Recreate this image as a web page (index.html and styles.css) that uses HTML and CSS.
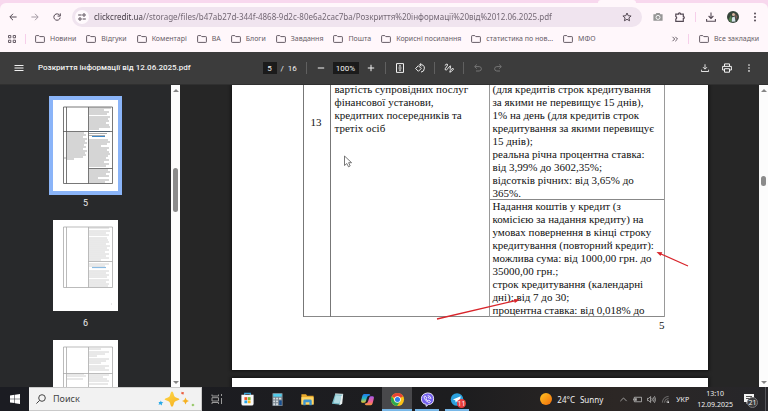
FILE: index.html
```html
<!DOCTYPE html>
<html lang="uk">
<head>
<meta charset="utf-8">
<title>Розкриття інформації від 12.06.2025.pdf</title>
<link rel="stylesheet" href="styles.css">
</head>
<body>
<svg class="defs" aria-hidden="true">
  <symbol id="folder" viewBox="0 0 10 8"><path d="M.6 1.2q0-.6.6-.6h2.6l1 1h4q.6 0 .6.6v4.6q0 .6-.6.6H1.2q-.6 0-.6-.6z" fill="none" stroke="currentColor" stroke-width="1"/></symbol>
  <symbol id="dots" viewBox="0 0 10 10"><circle cx="5" cy="1.5" r="1"/><circle cx="5" cy="5" r="1"/><circle cx="5" cy="8.5" r="1"/></symbol>
  <symbol id="download" viewBox="0 0 10 10"><path d="M5 .5v5.6M2.6 4 5 6.4 7.4 4M.6 7v2.2h8.8V7" fill="none" stroke="currentColor" stroke-width="1.1"/></symbol>
</svg>

<header class="browser">
  <div class="tabstrip"><div class="active-tab"></div></div>
  <div class="navbar">
    <button class="icon-btn" aria-label="Back"><svg class="i8" viewBox="0 0 8 8"><path d="M7.6 4H1M4 .8.8 4 4 7.2"/></svg></button>
    <button class="icon-btn dim" aria-label="Forward"><svg class="i8" viewBox="0 0 8 8"><path d="M.4 4H7M4 .8 7.2 4 4 7.2"/></svg></button>
    <button class="icon-btn" aria-label="Reload"><svg class="i8" viewBox="0 0 8 8"><path d="M6.9 2.6A3.2 3.2 0 1 0 7.2 4.6M7.3.4v2.7H4.6"/></svg></button>
    <div class="omnibox">
      <button class="site-btn" aria-label="Site information"><svg class="i8" viewBox="0 0 8 8"><path d="M.2 2h3.4M4.6 6h3.2"/><circle cx="6" cy="2" r="1.2"/><circle cx="2" cy="6" r="1.2"/></svg></button>
      <input class="url" type="text" aria-label="Address" value="clickcredit.ua//storage/files/b47ab27d-344f-4868-9d2c-80e6a2cac7ba/Розкриття%20інформації%20від%2012.06.2025.pdf">
      <button class="star-btn" aria-label="Bookmark"><svg class="i10" viewBox="0 0 10 10"><path d="M5 1l1.2 2.7 2.9.3-2.2 1.9.7 2.9L5 7.300 2.400 8.800l.7-2.900L.9 4l2.900-.3z"/></svg></button>
    </div>
    <button class="icon-btn camera" aria-label="Screenshot"><svg class="i10" viewBox="0 0 10 10"><path d="M.4 2.300h2.200l.8-1.200h3.200l.8 1.200h2.200v6.500H.4z" fill="#969696" stroke="none"/><circle cx="5" cy="5.400" r="2" stroke="#fff" stroke-width=".9"/></svg></button>
    <button class="icon-btn" aria-label="Extensions"><svg class="i10" viewBox="0 0 10 10"><path d="M.8 2.200h2.800V1.400q.9-1.200 1.800 0v.8h2.900V4.700h.5q1 .9 0 1.800h-.5v2.800H.8V7q1.800-1.300 0-2.600z" stroke-width="1.200"/></svg></button>
    <span class="divider"></span>
    <button class="icon-btn" aria-label="Downloads"><svg class="i10"><use href="#download"/></svg></button>
    <button class="icon-btn" aria-label="Profile"><svg class="i12" viewBox="0 0 12 12"><circle cx="6" cy="6" r="6" fill="#36443a" stroke="none"/><path d="M1.500 8.500 4 4l1 5-1 2.500z" fill="#55804f" stroke="none"/><path d="M8 2.500l2.500 3L9 9z" fill="#7c5a58" stroke="none"/><circle cx="6.500" cy="3.500" r="1.500" fill="#d9b7a0" stroke="none"/><path d="M4.800 10.800 5 6.500l2.700-1 .8 5z" fill="#d4e3ea" stroke="none"/></svg></button>
    <button class="icon-btn" aria-label="Menu"><svg class="i10 solid"><use href="#dots"/></svg></button>
  </div>
  <nav class="bookmarks">
    <button class="apps" aria-label="Apps"><svg class="i8" viewBox="0 0 8 8"><path d="M.5.5h2.300v2.300H.5zM5.200.5h2.300v2.300H5.200zM.5 5.200h2.300v2.300H.5zM5.200 5.200h2.300v2.300H5.200z"/></svg></button>
    <span class="divider"></span>
    <div class="links">
      <a href="#"><svg class="folder"><use href="#folder"/></svg>Новини</a>
      <a href="#"><svg class="folder"><use href="#folder"/></svg>Відгуки</a>
      <a href="#"><svg class="folder"><use href="#folder"/></svg>Коментарі</a>
      <a href="#"><svg class="folder"><use href="#folder"/></svg>ВА</a>
      <a href="#"><svg class="folder"><use href="#folder"/></svg>Блоги</a>
      <a href="#"><svg class="folder"><use href="#folder"/></svg>Завдання</a>
      <a href="#"><svg class="folder"><use href="#folder"/></svg>Пошта</a>
      <a href="#"><svg class="folder"><use href="#folder"/></svg>Корисні посилання</a>
      <a href="#"><svg class="folder"><use href="#folder"/></svg>статистика по нов...</a>
      <a href="#"><svg class="folder"><use href="#folder"/></svg>МФО</a>
    </div>
    <button class="more" aria-label="More bookmarks"><svg class="i6" viewBox="0 0 6 6"><path d="M.5.8 2.700 3 .5 5.200M3.300.8 5.500 3 3.300 5.200"/></svg></button>
    <span class="divider"></span>
    <a href="#"><svg class="folder"><use href="#folder"/></svg>Все закладки</a>
  </nav>
</header>

<div class="pdfbar">
  <div class="pdf-left">
    <button class="tool menu" aria-label="Sidebar"><svg viewBox="0 0 10 10"><path d="M.5 2.500h9M.5 5h9M.5 7.500h9"/></svg></button>
    <h1>Розкриття інформації від 12.06.2025.pdf</h1>
  </div>
  <div class="pdf-mid">
    <input class="field page-no" type="text" aria-label="Page" value="5">
    <span class="total">/&nbsp; 16</span>
    <span class="sep"></span>
    <button class="tool" aria-label="Zoom out"><svg viewBox="0 0 10 10"><path d="M1.800 5h6.400"/></svg></button>
    <input class="field zoom" type="text" aria-label="Zoom" value="100%">
    <button class="tool" aria-label="Zoom in"><svg viewBox="0 0 10 10"><path d="M1.800 5h6.400M5 1.800v6.400"/></svg></button>
    <span class="sep"></span>
    <button class="tool" aria-label="Fit to page"><svg viewBox="0 0 10 10"><path d="M1.500.600h7v8.800h-7zM3.500 5h3"/><path d="M5 1.700 3.600 3.400h2.800zM5 8.300 3.600 6.600h2.800z" class="fill"/></svg></button>
    <button class="tool" aria-label="Rotate"><svg viewBox="0 0 10 10"><path d="M3.400 2.700.600 5.500l2.800 2.800 2.800-2.800zM5 1.700q4.300-.4 4.400 3.500-.1 3.500-3.400 3.900M6.300.200 4.500 1.800l1.800 1.500"/></svg></button>
    <span class="sep"></span>
    <button class="tool" aria-label="Draw"><svg viewBox="0 0 10 10"><path d="M.800 2.500Q3.800-.300 3.500 2.200 2.700 4 1.400 5.300.500 7.200 2.300 7q2-1.400 3.500-3.800.900-1 .8.600-.700 1.600-.400 2.600M5.800 9.200l.4-1.600 2.400-2.500 1 1-2.400 2.500z"/></svg></button>
    <span class="sep"></span>
    <button class="tool off" aria-label="Undo"><svg viewBox="0 0 10 10"><path d="M3.800 1.500 1.700 3.600l2.100 2.100M1.700 3.600h4.500q2.200.2 2.200 2.200T6.200 8H3"/></svg></button>
    <button class="tool off" aria-label="Redo"><svg viewBox="0 0 10 10"><path d="M6.200 1.500l2.100 2.100-2.100 2.100M8.300 3.600H3.800Q1.600 3.800 1.600 5.800T3.800 8H7"/></svg></button>
  </div>
  <div class="pdf-right">
    <button class="tool" aria-label="Download"><svg viewBox="-1 -1 12 12"><use href="#download" width="10" height="10"/></svg></button>
    <button class="tool" aria-label="Print"><svg viewBox="0 0 10 10"><path d="M2.500 3.200V.900h5v2.300M2.400 7H.600V3.400h8.800V7H7.600M2.500 5.700h5v3.500h-5z"/></svg></button>
    <button class="tool" aria-label="More"><svg class="white" viewBox="-1 -1 12 12"><use href="#dots" width="10" height="10"/></svg></button>
  </div>
</div>

<main class="viewer">
  <aside class="thumbs">
    <button class="thumb current">
      <svg viewBox="0 0 65 91">
        <path class="txt" d="M36 8h22M36 10h15M36 12h20M36 14h18M36 17h21M36 19h19M36 21h20M36 23h17M36 25h20M36 27h21M36 29h10M36 33.500h18M36 35.500h16M36 40h19M36 42h21M36 44h18M36 46h12M36 48h20M36 50h18M36 52h20M36 54h21M36 56h19M36 58h17M36 60h20M36 62h15M36 64h20M36 66h17M36 70h19M36 72h21M36 74h17M36 76h20M36 78h9M36 80h20M36 82h16M14 33h17M14 35h19M14 37h16M14 39h20M14 41h18M14 43h20M14 45h17M14 47h19M14 49h16M14 51h20M14 53h18M14 55h19M14 57h16M14 59h7M11 58h2"/>
        <path class="link" d="M36 31.500h21M39 36.500h13"/>
        <path class="grid" d="M10.500 7v76.500h49V7zM13.500 7v76.500M35.500 7v76.500M10 31.500h49.500M35.500 68.500h24"/>
      </svg>
      <span>5</span>
    </button>
    <button class="thumb">
      <svg viewBox="0 0 65 91">
        <path class="txt faint" d="M36 8h20M36 11h21M36 13h17M36 15h20M36 18h18M36 20h19M36 22h20M36 24h17M36 26h21M36 28h18M36 30h20M36 32h16M36 34h20M36 36h17M36 38h20M36 40h12M36 44h20M36 46h16M36 51h20M36 53h17M36 55h20M36 57h18M36 60h20M36 62h17M36 64h20M36 66h19M58 84h1"/>
        <path class="link faint" d="M39 47.500h14"/>
        <path class="grid faint" d="M10.500 7v60.500h49V7zM13.500 7v60.500M35.500 7v60.500M35.500 41.500h24"/>
      </svg>
      <span>6</span>
    </button>
    <button class="thumb" aria-label="Page 7">
      <svg viewBox="0 0 65 91">
        <path class="txt faint" d="M36 9h12M36 12h20M36 14h16M36 16h8M36 19h20M36 21h17M36 23h12M36 26h20M36 28h16M36 30h20M36 35h20M36 37h14M36 39h18M36 41h20M36 44h19M14 34h17M14 36h19M14 39h16"/>
        <path class="grid faint" d="M10.500 7v76.500h49V7zM13.500 7v76.500M35.500 7v76.500M10 33.500h49.500"/>
      </svg>
    </button>
  </aside>
  <div class="scrollbar side"><i class="up"></i><b></b><i class="down"></i></div>

  <section class="pages">
    <article class="page">
      <table>
        <tbody>
          <tr>
            <td class="num" rowspan="2">13</td>
            <td class="name" rowspan="2">вартість супровідних послуг<br>фінансової установи,<br>кредитних посередників та<br>третіх осіб</td>
            <td class="terms">(для кредитів строк кредитування<br>за якими не перевищує 15 днів),<br>1% на день (для кредитів строк<br>кредитування за якими перевищує<br>15 днів);<br>реальна річна процентна ставка:<br>від 3,99% до 3602,35%;<br>відсотків річних: від 3,65% до<br>365%.</td>
          </tr>
          <tr>
            <td class="terms">Надання коштів у кредит (з<br>комісією за надання кредиту) на<br>умовах повернення в кінці строку<br>кредитування (повторний кредит):<br>можлива сума: від 1000,00 грн. до<br>35000,00 грн.;<br>строк кредитування (календарні<br>дні): від 7 до 30;<br>процентна ставка: від 0,018% до</td>
          </tr>
        </tbody>
      </table>
      <p class="folio">5</p>
      <svg class="marks" viewBox="0 0 476 285" aria-hidden="true">
        <path d="M205 234 284 215.500M456 181 429 169" stroke="#d8252b" stroke-width="1.300"/>
        <path d="M288 214.500l-6-.600.800 4zM424.500 167l5.800.300-1.800 3.700z" fill="#d8252b"/>
        <path d="M112.500 71v9.500l2.300-2 1.700 3.300 1.700-.900-1.600-3.200h3z" fill="#fff" stroke="#555" stroke-width=".8"/>
      </svg>
    </article>
    <article class="page next"></article>
  </section>
  <div class="scrollbar main"><i class="up"></i><b></b><i class="down"></i></div>
</main>

<footer class="taskbar">
  <button class="start" aria-label="Start"><svg viewBox="0 0 10 10"><path d="M0 1.400 4.500.800v3.900H0zM5 .700 10 0v4.700H5zM0 5.200h4.500v3.900L0 8.500zM5 5.200h5V10L5 9.300z" fill="#fff"/></svg></button>
  <label class="search">
    <svg class="lens" viewBox="0 0 10 10"><circle cx="6" cy="4" r="3.300"/><path d="M3.600 6.400.400 9.600"/></svg>
    <input type="text" placeholder="Поиск" aria-label="Поиск">
    <svg class="sparkle" viewBox="0 0 38 16"><defs><linearGradient id="gold" x2="1" y2="1"><stop stop-color="#ffda4a"/><stop offset="1" stop-color="#f2a313"/></linearGradient></defs><path d="M15 .500q1.200 0 2 4 .5 1.500 2 2 3.500 1 3.500 1.700T19 9.900q-1.500.5-2 2-.8 3.800-2 3.800t-2-3.800q-.5-1.500-2-2-3.500-1-3.500-1.700T11 6.500q1.500-.5 2-2 .8-4 2-4zM28.500 6.500l1.200 2.400 2.300 1-2.300 1-1.200 2.500-1.200-2.500-2.300-1 2.300-1z" fill="url(#gold)"/><path d="M3.700 9.500l.9 1.600 1.800.3-1.600 1 .2 2-1.600-1.200-1.900.6.800-1.600-.8-1.300 1.800.2z" fill="#25a9e8"/><path d="M24.500.700l1.300.6 1-.2-.2 2.300-2.300-.3z" fill="#ea5b3c"/><path d="M36 12.500l.6 1 1.100.4-1.100.5-.6 1.200-.8-1.100-1-.4 1.100-.6z" fill="#7dbd42"/></svg>
  </label>
  <button class="app" aria-label="Task view"><svg class="i12" viewBox="0 0 12 12"><path d="M1 1.500V3h6.500V1.500M1 11V9.500h6.500V11M1 4.700h6.500V8H1zM10.500 1v2M10.500 5v6" fill="none" stroke="#999"/></svg></button>
  <button class="app" aria-label="Store"><svg viewBox="0 0 16 16"><path d="M5 3.500V1.500h6v2" fill="none" stroke="#39a6dc" stroke-width="1.200"/><path d="M1.500 3h13v9.500q0 2-2 2h-9q-2 0-2-2z" fill="#f7f7f7"/><path d="M4.700 5.500h3v3h-3z" fill="#f15223"/><path d="M8.300 5.500h3v3h-3z" fill="#7cbb32"/><path d="M4.700 9h3v3h-3z" fill="#27a4e8"/><path d="M8.300 9h3v3h-3z" fill="#fbb91b"/></svg></button>
  <button class="app" aria-label="Calculator"><svg viewBox="0 0 16 16"><rect x="2.500" y="1" width="11" height="14" rx="1" fill="#77838c"/><path d="M3.500 2h9v3h-9z" fill="#51cdec"/><path d="M3.500 6h2v2h-2zM6.500 6h2v2h-2zM9.500 6h2.500v2H9.500zM3.500 9h2v2h-2zM6.500 9h2v2h-2zM3.500 12h2v2h-2zM6.500 12h2v2h-2z" fill="#d6dde2"/><path d="M9.800 9h2.700v5H9.800z" fill="#174f92"/></svg></button>
  <button class="app" aria-label="Explorer"><svg viewBox="0 0 16 16"><path d="M1.500 2.500h5l1 1.500h7v9h-13z" fill="#e9a92b"/><path d="M1.500 5.500h13v8h-13z" fill="#ffd766"/><path d="M3.500 14V9.500q0-1.500 1.500-1.500h6q1.500 0 1.500 1.500V14h-2.500v-3h-4v3z" fill="#3d94cf"/></svg></button>
  <button class="app" aria-label="Notepad"><svg viewBox="0 0 16 16"><path d="M5.500 2 14 2.500l-2.500 11L2 12.500z" fill="#75b9c5"/><path d="M6 3.500l6 .5-2 8-6-.5z" fill="#b2dce3"/><path d="M12 4l2-1-1 9.500-3 1.500z" fill="#e8eff0"/><path d="M5.500 2l8.500.5" stroke="#e5f3f5"/></svg></button>
  <button class="app" aria-label="Copilot"><svg viewBox="0 0 16 16"><defs><linearGradient id="cb" y2="1" x2="0"><stop stop-color="#2378ee"/><stop offset=".5" stop-color="#22b5c8"/><stop offset="1" stop-color="#f1c928"/></linearGradient><linearGradient id="cr" y2="1" x2="0"><stop stop-color="#a65bea"/><stop offset=".6" stop-color="#f36192"/><stop offset="1" stop-color="#f49a39"/></linearGradient></defs><path d="M4.500 2h5q1.200 0 1.500 1.500L9.500 4Q8 4 7.300 6.500L6.200 10q-.4 1.500-2 1.500H2.500Q.5 11.500 1.500 8l1-4Q3 2 4.500 2z" fill="url(#cb)"/><path d="M11.500 14h-5Q5.300 14 5 12.500l1.500-.5Q8 12 8.700 9.500L9.800 6q.4-1.500 2-1.500h1.700q2 0 1 3.500l-1 4q-.5 2-2 2z" fill="url(#cr)"/></svg></button>
  <button class="app open focus" aria-label="Chrome"><svg viewBox="0 0 16 16"><circle cx="8" cy="8" r="7" fill="#fbc116"/><path d="M8 8 1.900 4.500A7 7 0 0 1 14.100 4.500z" fill="#e84335"/><path d="M1.900 4.500A7 7 0 0 0 7.500 15L11 9.700 5 9.800z" fill="#2da94f"/><circle cx="8" cy="8" r="3.500" fill="#fff"/><circle cx="8" cy="8" r="2.700" fill="#2f7de9"/></svg></button>
  <button class="app open" aria-label="Viber"><svg viewBox="0 0 16 16"><path d="M8 1q6.500 0 6.500 6.200T9 13.300L6.500 15.300v-2.200Q1.500 12.500 1.500 7.200T8 1z" fill="#7360ed" stroke="#eeeaff" stroke-width="1"/><path d="M5.300 4q-1.500.8-.7 2.700 1.300 3 4.700 4.500 1 .3 1.900-1.200L9.400 8.600l-1 .8Q7 8.600 6.500 7.100l.7-.9zM8.200 3.800q3.300.2 3.500 3.700M8.300 5.500q1.500.2 1.700 1.800" fill="none" stroke="#fff" stroke-width=".9"/></svg></button>
  <button class="app open" aria-label="Telegram"><svg viewBox="0 0 16 16"><circle cx="7.500" cy="8" r="6.700" fill="#2ba0dc"/><path d="M3 8l8.500-3.500-1.700 7.300-2.500-1.900-1.300 1.200-.3-2.300z" fill="#fff"/></svg><span class="count">11</span></button>
  <div class="tray">
    <button class="weather"><svg class="i12" viewBox="0 0 12 12"><defs><linearGradient id="sun" x2="1" y2="1"><stop stop-color="#ffc421"/><stop offset="1" stop-color="#f06c0c"/></linearGradient></defs><circle cx="6" cy="6" r="6" fill="url(#sun)"/></svg><span>24°C</span><span>Sunny</span></button>
    <button class="t" aria-label="Hidden icons"><svg viewBox="0 0 10 10"><path d="M1.500 6.800 5 3.300l3.500 3.500"/></svg></button>
    <button class="t" aria-label="Battery"><svg viewBox="0 0 10 10"><path d="M1.500 2.500h8v5h-8zM.500 4v2"/><path d="M2.500 3.500h1.500v3H2.500z" fill="#ddd" stroke="none"/></svg></button>
    <button class="t" aria-label="Volume"><svg viewBox="0 0 10 10"><path d="M.500 3.700h1.500L4 1.700v6.600L2 6.300H.500zM5.500 3.500q1 1.500 0 3M7 2.500q1.800 2.500 0 5M8.300 1.300q2.500 3.700 0 7.400"/></svg></button>
    <button class="t" aria-label="Network"><svg viewBox="0 0 10 10"><path d="M1.500 8.500Q2 2 8.500 1.500M3.700 8.500q.4-4.400 4.800-4.800M5.900 8.500q.3-2.300 2.600-2.600" stroke="#888"/><circle cx="8" cy="8" r="1" fill="#ddd" stroke="none"/></svg></button>
    <button class="lang">УКР</button>
    <button class="clock"><span>13:10</span><span>12.09.2025</span></button>
    <button class="notes" aria-label="Notifications"><svg viewBox="0 0 12 12"><path d="M1 1h10v8H5.500L3.500 11V9H1z" fill="#f3f3f3"/><path d="M3 3.500h6M3 5.500h6" stroke="#2a2828" stroke-width=".8"/></svg><span class="badge">21</span></button>
  </div>
</footer>
</body>
</html>
```

FILE: styles.css
```css
* { box-sizing: border-box; }

body {
  margin: 0;
  height: 100vh;
  display: flex;
  flex-direction: column;
  overflow: hidden;
  background: #262626;
  font-family: "Noto Sans", "Open Sans", sans-serif;
}

button, input {
  margin: 0;
  padding: 0;
  border: 0;
  background: none;
  font: inherit;
  color: inherit;
  outline: 0;
}

a { color: inherit; text-decoration: none; }
svg { display: block; flex: none; }
.defs { position: absolute; width: 0; height: 0; }

.i6 { width: 6px; height: 6px; }
.i8 { width: 8px; height: 8px; }
.i10 { width: 10px; height: 10px; }
.i12 { width: 12px; height: 12px; }

/* Browser chrome */
.browser { background: #f8d8ee; color: #554a55; }
.browser svg { fill: none; stroke: currentColor; overflow: visible; }
.browser svg.solid { fill: currentColor; stroke: none; }
.browser .folder { stroke: none; }

.tabstrip { height: 3px; display: flex; justify-content: flex-end; padding-right: 132px; }
.active-tab { width: 38px; background: #fff7fb; border-radius: 3px 3px 0 0; }

.navbar {
  display: flex;
  align-items: center;
  height: 28px;
  padding: 0 2px;
  background: #fff7fb;
  border-radius: 6px 6px 0 0;
}
.icon-btn { width: 22px; height: 22px; display: grid; place-items: center; flex: none; }
.dim { color: #a39aa3; }
.divider { width: 1px; height: 10px; background: #f6cfea; flex: none; }
.navbar .divider { margin: 0 4px; }

.omnibox {
  flex: 1;
  display: flex;
  align-items: center;
  height: 20px;
  margin: 0 5px 0 4px;
  padding: 0 10px 0 3px;
  border-radius: 10px;
  background: #f0e4ef;
}
.site-btn { width: 14px; height: 14px; border-radius: 7px; background: #fffafd; display: grid; place-items: center; flex: none; }
.url {
  flex: 1;
  min-width: 0;
  margin-left: 5px;
  font-size: 8px;
  line-height: 12px;
  color: transparent;
  background: linear-gradient(90deg, #3d343e 48px, #6c616d 48px);
  background-clip: text;
}
.star-btn { width: 10px; height: 10px; }

.bookmarks {
  display: flex;
  align-items: center;
  height: 21px;
  padding: 0 9px 5px 8px;
  background: #fff7fb;
  font-size: 7px;
  line-height: 10px;
  color: #665c66;
}
.apps { margin-right: 9px; }
.links { flex: 1; display: flex; gap: 10px; margin-left: 9px; }
.bookmarks a { display: flex; align-items: center; gap: 5px; white-space: nowrap; }
.folder { width: 10px; height: 8px; }
.more { margin-right: 10px; }
.bookmarks .more + .divider { margin-right: 10px; }

/* PDF toolbar */
.pdfbar {
  display: grid;
  grid-template-columns: 1fr auto 1fr;
  align-items: center;
  height: 33px;
  padding: 0 11px;
  background: #3c3c3c;
  border-bottom: 1px solid #303030;
  color: #f1f1f1;
  font-family: Roboto, sans-serif;
  font-size: 8px;
  position: relative;
  z-index: 1;
}
.pdf-left, .pdf-mid, .pdf-right { display: flex; align-items: center; }
.pdf-left { gap: 11px; }
.pdf-mid { gap: 4px; }
.pdf-right { justify-content: flex-end; gap: 6px; }
.pdfbar h1 { margin: 0; font-size: 8px; font-weight: 500; line-height: 12px; white-space: nowrap; }
.tool { width: 16px; height: 16px; display: grid; place-items: center; flex: none; }
.tool svg { width: 10px; height: 10px; fill: none; stroke: currentColor; stroke-width: 1; }
.tool svg .fill { fill: currentColor; stroke: none; }
.tool svg.white { fill: currentColor; stroke: none; }
.off { color: #757575; }
.field { height: 12px; background: #1b1b1b; text-align: center; font-size: 8px; }
.page-no { width: 14px; }
.zoom { width: 26px; }
.total { width: 19px; white-space: nowrap; }
.sep { width: 1px; height: 12px; margin: 0 2px; background: #606060; }

/* Viewer */
.viewer { flex: 1; min-height: 0; display: flex; }
.thumbs {
  width: 171px;
  flex: none;
  overflow: hidden;
  display: flex;
  flex-direction: column;
  align-items: center;
  gap: 8px;
  padding-top: 11px;
  background: #28292b;
}
.thumb { display: flex; flex-direction: column; align-items: center; flex: none; }
.thumb svg {
  width: 73px;
  height: 99px;
  border: 4px solid transparent;
  background: #fff content-box;
}
.thumb.current svg { border-color: #8ab4f8; }
.thumb span { font-family: Roboto, sans-serif; font-size: 9px; line-height: 10px; margin-top: 3px; color: #ededed; }
.txt { fill: none; stroke: #ababab; stroke-width: 1; }
.txt.faint { stroke: #d2d2d2; }
.grid { fill: none; stroke: #555; stroke-width: .8; }
.grid.faint { stroke: #aaa; }
.link { fill: none; stroke: #3b87c8; stroke-width: 1.200; }
.link.faint { stroke: #8bbbe2; }

.scrollbar {
  width: 9px;
  flex: none;
  display: flex;
  flex-direction: column;
  align-items: center;
  padding: 4px 0 3px;
  background: #fcfcfc;
}
.scrollbar b { width: 5px; border-radius: 3px; background: #8b8b8b; }
.scrollbar .down { margin-top: auto; }
.scrollbar i { border: 3px solid transparent; border-top-width: 0; border-bottom: 3px solid #858585; }
.scrollbar i.down { border-bottom-width: 0; border-top: 3px solid #858585; }
.side b { height: 44px; margin-top: 76px; }
.main b { height: 10px; margin-top: 84px; }

.pages {
  flex: 1;
  min-width: 0;
  overflow: hidden;
  display: flex;
  flex-direction: column;
  align-items: center;
  gap: 8px;
  background: #262626;
}
.page {
  position: relative;
  flex: none;
  width: 476px;
  max-width: 100%;
  padding: 0 43px 38px 71px;
  background: #fff;
  box-shadow: 0 0 3px 1px #111;
  font-family: "Liberation Serif", serif;
  font-size: 11px;
  line-height: 13px;
  color: #111;
}
.page.next { padding-bottom: 60px; }
.page table { width: 100%; margin-top: -2px; border-spacing: 0; table-layout: fixed; }
.page td { padding: 0; vertical-align: top; white-space: nowrap; box-shadow: inset 1px 0 #777, inset 0 -1px #888; }
.page td.num { width: 27px; padding-top: 33px; text-align: center; }
.page td.name { width: 159px; padding-left: 5px; }
.page td.terms { padding-left: 4px; box-shadow: inset 1px 0 #999, inset -1px 0 #999, inset 0 -1px #888; }
.folio { margin: 0; padding-top: 2px; text-align: right; }
.marks { position: absolute; left: 0; top: 0; width: 476px; height: 285px; }

/* Taskbar */
.taskbar {
  display: flex;
  height: 24px;
  flex: none;
  position: relative;
  background: linear-gradient(90deg, #1b1c22, #1d1d1f 60%, #2c2725 80%, #26262a);
  color: #f0f0f0;
}
.start { width: 29px; display: grid; place-items: center; }
.start svg { width: 10px; height: 10px; }
.search {
  display: flex;
  align-items: center;
  width: 173px;
  padding: 0 6px 0 7px;
  background: #f2f2f2;
  border: 1px solid #c9c9c9;
  border-width: 1px 1px 1px 0;
}
.lens { width: 10px; height: 10px; fill: none; stroke: #444; stroke-width: 1; }
.search input { flex: 1; min-width: 0; margin-left: 7px; font-size: 9px; line-height: 12px; color: #333; }
.search input::placeholder { color: #444; opacity: 1; }
.sparkle { width: 38px; height: 16px; }

.app { position: relative; width: 30px; display: grid; place-items: center; flex: none; }
.app svg:not(.i12) { width: 15px; height: 15px; }
.open { background: linear-gradient(#78b8e8, #78b8e8) center bottom / 24px 2px no-repeat; }
.focus { background-color: #48484b; background-size: 100% 2px; }
.count {
  position: absolute;
  right: 6px;
  bottom: 3px;
  width: 9px;
  height: 9px;
  border-radius: 5px;
  background: #e93c3c;
  font-size: 7px;
  line-height: 9px;
}

.tray { margin-left: auto; display: flex; align-items: center; padding-right: 2px; }
.weather { display: flex; align-items: center; gap: 5px; font-size: 8px; margin-right: 13px; }
.t { width: 14px; height: 14px; display: grid; place-items: center; }
.t svg { width: 9px; height: 9px; fill: none; stroke: #ccc; stroke-width: .8; }
.lang { font-size: 7px; margin: 0 8px 0 4px; }
.clock { display: flex; flex-direction: column; align-items: center; font-size: 7px; line-height: 11px; }
.notes { position: relative; width: 33px; height: 24px; padding-left: 10px; border-right: 1px solid #55555a; }
.notes svg { width: 12px; height: 12px; }
.badge {
  position: absolute;
  right: 7px;
  bottom: 3px;
  width: 11px;
  height: 11px;
  border-radius: 6px;
  background: #3c3c3e;
  border: 1px solid #77777a;
  font-size: 7px;
  line-height: 9px;
  text-align: center;
}
```
